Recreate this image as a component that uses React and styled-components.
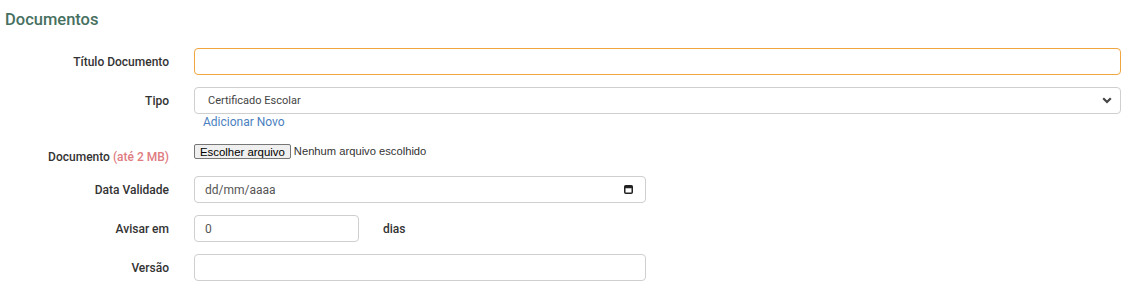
import React from 'react';
import styled, { createGlobalStyle } from 'styled-components';

const GlobalStyle = createGlobalStyle`
  body {
    margin: 0;
    background: #fff;
    font-family: Roboto, "Liberation Sans", sans-serif;
  }
`;

const Page = styled.div`
  padding: 9px 8px 0 5px;
`;

const Title = styled.h3`
  margin: 0 0 17px;
  font-size: 16.5px;
  line-height: 22px;
  font-weight: 500;
  color: #46705f;
`;

const Row = styled.div`
  display: grid;
  grid-template-columns: 164px 1fr;
  column-gap: 25px;
  align-items: start;
  margin-bottom: ${props => props.gap ?? 12}px;
`;

const Label = styled.label`
  box-sizing: border-box;
  height: 27px;
  padding-top: 2px;
  text-align: right;
  font-size: 12px;
  line-height: 25px;
  font-weight: 500;
  color: #333;
`;

const Hint = styled.span`
  color: #e07b7f;
`;

const Field = styled.div`
  display: flex;
  flex-direction: column;
  align-items: flex-start;
`;

const Inline = styled.div`
  display: flex;
  align-items: center;
`;

const TextInput = styled.input`
  box-sizing: border-box;
  width: ${props => props.w || '100%'};
  height: 27px;
  padding: 0 10px;
  border: 1px solid ${props => (props.focused ? '#f0a640' : '#cfcfcf')};
  border-radius: 4px;
  font-family: Roboto, sans-serif;
  font-size: 12px;
  color: #555;
  outline: none;
  background: #fff;
`;

const SelectBox = styled.div`
  box-sizing: border-box;
  width: 100%;
  height: 27px;
  display: flex;
  align-items: center;
  justify-content: space-between;
  padding: 0 8px 0 13px;
  border: 1px solid #cfcfcf;
  border-radius: 4px;
  font-size: 11px;
  color: #444;
`;

const LinkText = styled.a`
  margin-left: 9px;
  font-size: 12px;
  line-height: 17px;
  color: #4a7fc0;
  text-decoration: none;
  cursor: pointer;
`;

const FileButton = styled.button`
  box-sizing: border-box;
  height: 15px;
  margin-top: 1px;
  padding: 0 5px;
  background: #efefef;
  border: 1px solid #767676;
  border-radius: 2px;
  font-family: "Liberation Sans", Arial, sans-serif;
  font-size: 11.4px;
  line-height: 12px;
  color: #000;
`;

const FileName = styled.span`
  margin-left: 3px;
  font-family: "Liberation Sans", Arial, sans-serif;
  font-size: 11.2px;
  line-height: 15px;
  color: #333;
`;

const DateBox = styled.div`
  box-sizing: border-box;
  width: 452px;
  height: 27px;
  display: flex;
  align-items: center;
  justify-content: space-between;
  padding: 0 12px 0 10px;
  border: 1px solid #cfcfcf;
  border-radius: 4px;
  font-size: 12px;
  color: #555;
`;

const Suffix = styled.span`
  margin-left: 24px;
  font-size: 12px;
  font-weight: 500;
  color: #333;
`;

const Chevron = () => (
  <svg width="10" height="7" viewBox="0 0 10 7">
    <path d="M1.2 1.2 L5 5 L8.8 1.2" fill="none" stroke="#444" strokeWidth="2.2" />
  </svg>
);

const CalendarIcon = () => (
  <svg width="9" height="9" viewBox="0 0 9 9">
    <rect x="0.75" y="0.75" width="7.5" height="7.5" rx="1" fill="none" stroke="#222" strokeWidth="1.5" />
    <rect x="0.75" y="0.75" width="7.5" height="2.5" fill="#222" />
  </svg>
);

export default function App() {
  return (
    <>
      <GlobalStyle />
      <Page>
        <Title>Documentos</Title>

        <Row>
          <Label>Título Documento</Label>
          <TextInput focused />
        </Row>

        <Row>
          <Label>Tipo</Label>
          <Field>
            <SelectBox>
              <span>Certificado Escolar</span>
              <Chevron />
            </SelectBox>
            <LinkText>Adicionar Novo</LinkText>
          </Field>
        </Row>

        <Row gap={6}>
          <Label>
            Documento <Hint>(até 2 MB)</Hint>
          </Label>
          <Inline>
            <FileButton>Escolher arquivo</FileButton>
            <FileName>Nenhum arquivo escolhido</FileName>
          </Inline>
        </Row>

        <Row>
          <Label>Data Validade</Label>
          <DateBox>
            <span>dd/mm/aaaa</span>
            <CalendarIcon />
          </DateBox>
        </Row>

        <Row>
          <Label>Avisar em</Label>
          <Inline>
            <TextInput w="165px" defaultValue="0" />
            <Suffix>dias</Suffix>
          </Inline>
        </Row>

        <Row>
          <Label>Versão</Label>
          <TextInput w="452px" />
        </Row>
      </Page>
    </>
  );
}
